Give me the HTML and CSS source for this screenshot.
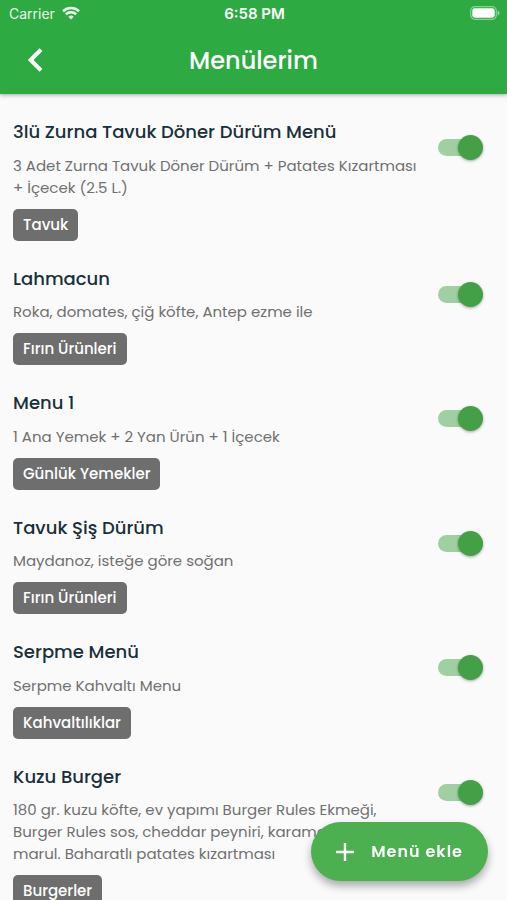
FILE: index.html
```html
<!DOCTYPE html>
<html lang="tr">
<head>
<meta charset="utf-8">
<meta name="viewport" content="width=device-width, initial-scale=1">
<title>Menülerim</title>
<link rel="stylesheet" href="styles.css">
</head>
<body>
<header class="top">
  <div class="status">
    <span class="carrier">Carrier
      <svg class="wifi" viewBox="0 0 18 14" aria-hidden="true"><path d="M9 13.6 6.3 10.7a4 4 0 0 1 5.4 0z" fill="currentColor"/><path d="M3.8 8.3a7.6 7.6 0 0 1 10.4 0M1 5.2a11.8 11.8 0 0 1 16 0" fill="none" stroke="currentColor" stroke-width="2.6"/></svg>
    </span>
    <span class="clock">6:58 PM</span>
    <svg class="battery" viewBox="0 0 30 14" aria-hidden="true"><rect x=".7" y=".7" width="25.6" height="12.6" rx="4" fill="none" stroke="currentColor" stroke-opacity=".45" stroke-width="1.2"/><rect x="2.3" y="2.3" width="22.4" height="9.4" rx="2.4" fill="currentColor"/><path d="M27.6 4.6q2 .7 2 2.4t-2 2.4z" fill="currentColor" fill-opacity=".5"/></svg>
  </div>
  <div class="bar">
    <button class="back" type="button" aria-label="Geri"><svg viewBox="0 0 16 24" aria-hidden="true"><path d="M14 1.600 3.600 12 14 22.400" fill="none" stroke="currentColor" stroke-width="4"/></svg></button>
    <h1>Menülerim</h1>
  </div>
</header>
<main class="list">
  <article class="item">
    <div class="text"><h2 id="m1">3lü Zurna Tavuk Döner Dürüm Menü</h2><p>3 Adet Zurna Tavuk Döner Dürüm + Patates Kızartması + İçecek (2.5 L.)</p><span class="chip">Tavuk</span></div>
    <input class="switch" type="checkbox" role="switch" aria-labelledby="m1" checked>
  </article>
  <article class="item">
    <div class="text"><h2 id="m2">Lahmacun</h2><p>Roka, domates, çiğ köfte, Antep ezme ile</p><span class="chip">Fırın Ürünleri</span></div>
    <input class="switch" type="checkbox" role="switch" aria-labelledby="m2" checked>
  </article>
  <article class="item">
    <div class="text"><h2 id="m3">Menu 1</h2><p>1 Ana Yemek + 2 Yan Ürün + 1 İçecek</p><span class="chip">Günlük Yemekler</span></div>
    <input class="switch" type="checkbox" role="switch" aria-labelledby="m3" checked>
  </article>
  <article class="item">
    <div class="text"><h2 id="m4">Tavuk Şiş Dürüm</h2><p>Maydanoz, isteğe göre soğan</p><span class="chip">Fırın Ürünleri</span></div>
    <input class="switch" type="checkbox" role="switch" aria-labelledby="m4" checked>
  </article>
  <article class="item">
    <div class="text"><h2 id="m5">Serpme Menü</h2><p>Serpme Kahvaltı Menu</p><span class="chip">Kahvaltılıklar</span></div>
    <input class="switch" type="checkbox" role="switch" aria-labelledby="m5" checked>
  </article>
  <article class="item">
    <div class="text"><h2 id="m6">Kuzu Burger</h2><p>180 gr. kuzu köfte, ev yapımı Burger Rules Ekmeği, Burger Rules sos, cheddar peyniri, karamelize<br>marul. Baharatlı patates kızartması</p><span class="chip">Burgerler</span></div>
    <input class="switch" type="checkbox" role="switch" aria-labelledby="m6" checked>
  </article>
</main>
<button class="add" type="button"><svg viewBox="0 0 18 18" aria-hidden="true"><path d="M9 0v18M0 9h18" stroke="currentColor" stroke-width="2.400"/></svg>Menü ekle</button>
</body>
</html>
```
FILE: styles.css
```css
* { box-sizing: border-box; }

body {
  margin: 0;
  height: 100vh;
  display: flex;
  flex-direction: column;
  overflow: hidden;
  background: #fafafa;
  font-family: Poppins, Inter, "Open Sans", sans-serif;
}

h1, h2, p { margin: 0; }

button {
  border: 0;
  color: inherit;
  font-family: inherit;
  cursor: pointer;
}

.top {
  flex: none;
  background: #2eaa43;
  color: #fff;
  box-shadow: 0 1px 4px rgba(0, 0, 0, .35);
  z-index: 1;
}

.status {
  display: grid;
  grid-template-columns: 1fr auto 1fr;
  align-items: center;
  height: 26px;
  padding: 0 7px 0 9px;
  font-family: Inter, sans-serif;
  font-size: 14px;
}

.carrier {
  display: flex;
  align-items: center;
  gap: 7px;
  opacity: .9;
}

.wifi { width: 18px; height: 14px; }
.clock { font-size: 15px; font-weight: 600; }
.battery { width: 30px; height: 14px; justify-self: end; }

.bar {
  display: grid;
  grid-template-columns: 70px 1fr 70px;
  align-items: center;
  height: 68px;
}

.back {
  display: grid;
  place-items: center;
  height: 48px;
  padding: 0;
  background: none;
}

.back svg { width: 16px; height: 24px; }

h1 {
  font-size: 24px;
  font-weight: 500;
  text-align: center;
}

.list {
  flex: 1;
  min-height: 0;
  overflow-y: auto;
  scrollbar-width: none;
  display: flex;
  flex-direction: column;
  gap: 25px;
  padding: 25px 24px 96px 13px;
}

.item {
  flex: none;
  display: flex;
  align-items: flex-start;
  justify-content: space-between;
  gap: 20px;
}

.text { min-width: 0; }

h2 {
  color: #19303a;
  font-size: 18px;
  font-weight: 500;
  line-height: 1.42;
}

p {
  margin: 10px 0;
  color: #707070;
  font-size: 15px;
  line-height: 22px;
}

.chip {
  display: block;
  width: fit-content;
  padding: 0 10px;
  border-radius: 5px;
  background: #6e6e6e;
  color: #fff;
  font-size: 15px;
  font-weight: 500;
  line-height: 32px;
}

.switch {
  appearance: none;
  flex: none;
  display: grid;
  align-items: center;
  width: 45px;
  height: 25px;
  margin: 16px 0 0;
}

.switch::before,
.switch::after {
  content: "";
  grid-area: 1 / 1;
}

.switch::before {
  width: 38px;
  height: 17px;
  border-radius: 9px;
  background: #a0d0a2;
}

.switch::after {
  width: 25px;
  height: 25px;
  border-radius: 50%;
  background: #43a047;
  box-shadow: 0 1px 3px rgba(0, 0, 0, .35);
}

.switch:checked::after { justify-self: end; }

.add {
  position: fixed;
  right: 19px;
  bottom: 19px;
  z-index: 2;
  display: flex;
  align-items: center;
  gap: 17px;
  height: 59px;
  padding: 0 25px;
  border-radius: 30px;
  background: #4caf50;
  color: #fff;
  box-shadow: 0 5px 9px rgba(0, 0, 0, .32);
  font-size: 16px;
  font-weight: 600;
  letter-spacing: 1px;
}

.add svg { width: 18px; height: 18px; }
```
